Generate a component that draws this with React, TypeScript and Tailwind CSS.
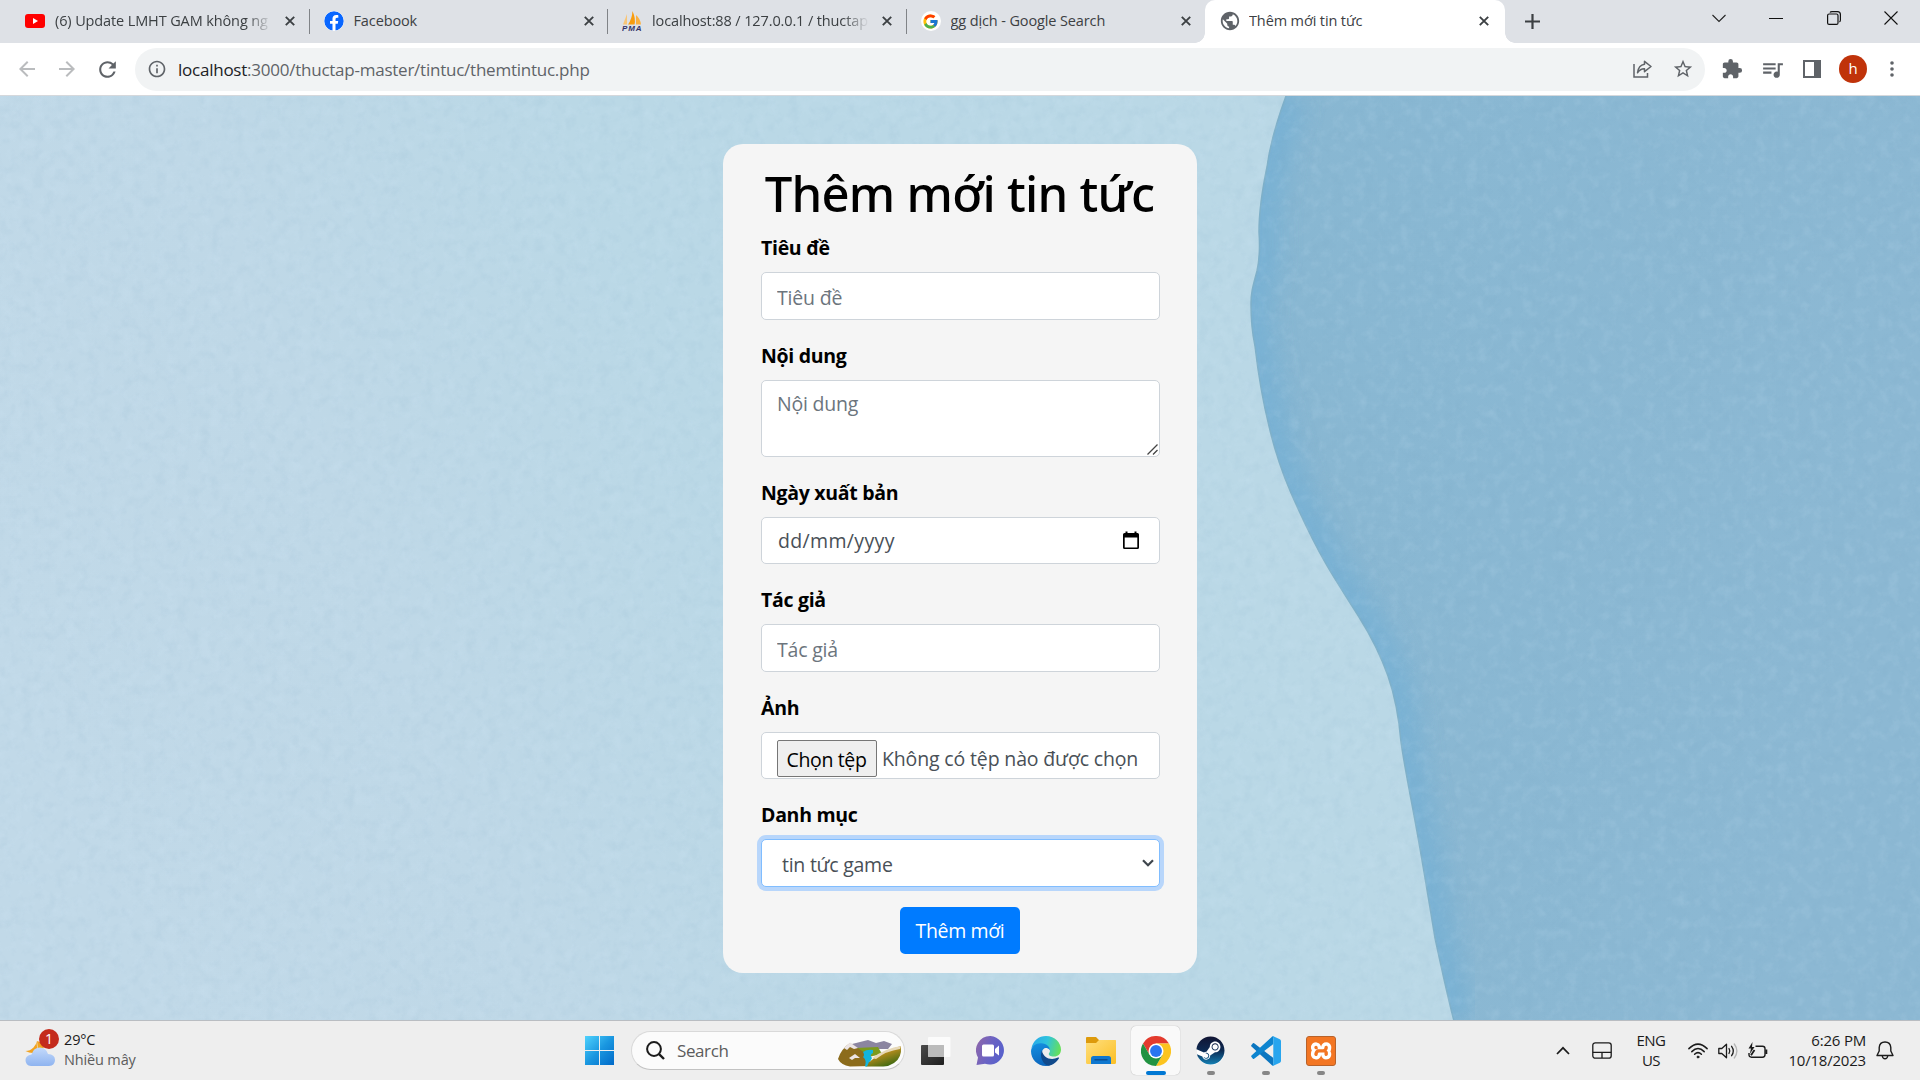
import React from "react";
import {
  MdArrowBack,
  MdArrowForward,
  MdRefresh,
  MdInfoOutline,
  MdStarBorder,
  MdExtension,
  MdQueueMusic,
  MdPublic,
} from "react-icons/md";
import { FcGoogle } from "react-icons/fc";
import { FaFacebook, FaSteam } from "react-icons/fa";
import { SiXampp } from "react-icons/si";

/* ---------- Browser tabs ---------- */

function YoutubeIcon() {
  return (
    <svg width="20" height="14" viewBox="0 0 20 14">
      <rect width="20" height="14" rx="3" fill="#ff0000" />
      <path d="M8 4 L13 7 L8 10 Z" fill="#fff" />
    </svg>
  );
}

function PmaIcon() {
  return (
    <svg width="20" height="20" viewBox="0 0 20 20">
      <path d="M5 3 L5 13.500 L1 13.500 Z" fill="#f8c577" />
      <path d="M10.500 0 Q14 8 12.500 13.500 L6 13.500 Q10 8 10.500 0Z" fill="#f89c0e" />
      <path d="M14 4 Q18.500 8 19 13.500 L14 13.500 Z" fill="#fbb040" />
      <text x="0" y="19.500" fontSize="8" fontWeight="700" fontStyle="italic" textLength="19.500" fontFamily="Liberation Sans, sans-serif" fill="#333366">
        PMA
      </text>
    </svg>
  );
}

function GoogleIcon() {
  return (
    <span className="flex size-5 items-center justify-center rounded-full bg-white">
      <FcGoogle size={17} />
    </span>
  );
}

function CloseX() {
  return (
    <svg width="10" height="10" viewBox="0 0 10 10" className="shrink-0">
      <path d="M0.800 0.800 L9.200 9.200 M9.200 0.800 L0.800 9.200" stroke="#3c4043" strokeWidth="1.900" fill="none" />
    </svg>
  );
}

function Tab({ icon, title, divider, fade }: { icon: React.ReactNode; title: string; divider?: boolean; fade?: boolean }) {
  return (
    <div className="flex h-full w-[298.5px] items-center pb-px pl-[14px]">
      <span className="flex w-5 shrink-0 justify-center">{icon}</span>
      <span
        className={
          "ml-[10px] w-[217px] overflow-hidden text-[14.5px] leading-5 tracking-[-0.12px] whitespace-nowrap text-[#3c4043]" +
          (fade ? " [mask-image:linear-gradient(to_right,black_88%,transparent)]" : "")
        }
      >
        {title}
      </span>
      <span className="ml-[13px] flex">
        <CloseX />
      </span>
      {divider && <span className="ml-auto h-[25px] w-px bg-[#808387]" />}
    </div>
  );
}

function TabStrip() {
  return (
    <div className="flex h-[43px] bg-[#dee1e6] pl-[11px]">
      <Tab icon={<YoutubeIcon />} title="(6) Update LMHT GAM không ng" divider fade />
      <Tab icon={<FaFacebook size={20} color="#0866ff" className="rounded-full bg-white" />} title="Facebook" divider />
      <Tab icon={<PmaIcon />} title="localhost:88 / 127.0.0.1 / thuctap" divider fade />
      <Tab icon={<GoogleIcon />} title="gg dịch - Google Search" />
      <div className="relative h-full w-[300px] rounded-t-[10px] bg-white">
        <span className="absolute bottom-0 -left-[10px] size-[10px] bg-[radial-gradient(circle_at_0_0,transparent_9.5px,white_10px)]" />
        <span className="absolute -right-[10px] bottom-0 size-[10px] bg-[radial-gradient(circle_at_100%_0,transparent_9.5px,white_10px)]" />
        <Tab icon={<MdPublic size={22} color="#5f6368" className="ml-px shrink-0" />} title="Thêm mới tin tức" />
      </div>
      <div className="ml-[20px] flex items-center">
        <svg width="15" height="15" viewBox="0 0 15 15">
          <path d="M7.500 0 V15 M0 7.500 H15" stroke="#3c4043" strokeWidth="2.200" />
        </svg>
      </div>
      <div className="mt-[11px] mr-[22px] ml-auto flex h-[14px] items-center gap-[43.500px]">
        <svg width="14" height="14" viewBox="0 0 14 14" className="text-[#222]">
          <path d="M0.500 4 L7 10.500 L13.500 4" fill="none" stroke="currentColor" strokeWidth="1.100" />
        </svg>
        <svg width="14" height="14" viewBox="0 0 14 14">
          <path d="M0 7.500 H14" stroke="#111" strokeWidth="1" />
        </svg>
        <svg width="14" height="14" viewBox="0 0 14 14" fill="none" stroke="#111" strokeWidth="1.200">
          <rect x="0.600" y="3" width="10.400" height="10.400" rx="1.500" />
          <path d="M3 1.500 Q3.500 0.600 5 0.600 H10.500 Q13.400 0.600 13.400 3.500 V9 Q13.400 10.500 12.400 11" />
        </svg>
        <svg width="14" height="14" viewBox="0 0 14 14">
          <path d="M0.500 0.500 L13.500 13.500 M13.500 0.500 L0.500 13.500" stroke="#111" strokeWidth="1.100" />
        </svg>
      </div>
    </div>
  );
}

function Toolbar() {
  return (
    <div className="flex h-[53px] items-center border-b border-[#d5d8dc] bg-white pr-[18px] pl-[15px] text-[#5f6368]">
      <MdArrowBack size={24} color="#babcbe" />
      <MdArrowForward size={24} color="#babcbe" className="ml-[16px]" />
      <MdRefresh size={25} className="ml-[16px]" />
      <div className="ml-[15px] flex h-[43px] w-[1570px] items-center rounded-full bg-[#f1f3f4] pr-[11px] pl-[12px]">
        <MdInfoOutline size={20} />
        <span className="ml-[11px] pt-px text-[17px] leading-6 tracking-[-0.24px] text-[#5f6368]">
          <span className="text-[#202124]">localhost</span>:3000/thuctap-master/tintuc/themtintuc.php
        </span>
        <svg width="19" height="18" viewBox="0 0 19 18" className="ml-auto" fill="none" stroke="#5f6368" strokeWidth="1.500">
          <path d="M1 4 V17 H14.500 V13" />
          <path d="M11.500 1.300 L18 6.500 L11.500 11.700 V8.800 Q7.500 8.600 4.500 12.800 Q5.500 5.200 11.500 4.300 Z" strokeLinejoin="round" />
        </svg>
        <MdStarBorder size={22} className="ml-[20px]" />
      </div>
      <MdExtension size={22} className="ml-[16px]" />
      <MdQueueMusic size={25} className="ml-[17px]" />
      <svg width="18" height="18" viewBox="0 0 18 18" className="ml-[18px]">
        <path d="M0 0 H18 V18 H0 Z M2 2 V16 H11 V2 Z" fill="#5f6368" fillRule="evenodd" />
      </svg>
      <span className="ml-[18px] flex size-7 items-center justify-center rounded-full bg-[#c0330a] pb-px text-[15px] leading-none text-white">h</span>
      <svg width="4" height="16" viewBox="0 0 4 16" className="mr-[8px] ml-auto" fill="#5f6368">
        <circle cx="2" cy="2" r="1.800" />
        <circle cx="2" cy="8" r="1.800" />
        <circle cx="2" cy="14" r="1.800" />
      </svg>
    </div>
  );
}

/* ---------- Page ---------- */

const EDGE =
  "M1286 0 C1278 22 1270 48 1267 71 C1262 95 1259 118 1259 136 C1260 150 1259 166 1257 175 C1253 190 1251 196 1251 208 C1251 222 1252 236 1255 250 C1258 276 1263 306 1269 330 C1274 352 1282 376 1291 397 C1302 422 1314 447 1326 468 C1337 487 1349 505 1359 521 C1371 540 1381 560 1388 580 C1396 603 1399 622 1401 646 C1405 674 1411 702 1416 730 C1423 768 1429 806 1435 842 C1441 870 1447 898 1454 925";

function PaperBackdrop() {
  return (
    <svg className="absolute inset-0 h-full w-full" viewBox="0 0 1920 924" preserveAspectRatio="none">
      <defs>
        <linearGradient id="light" x1="0" y1="0.600" x2="1" y2="0.400">
          <stop offset="0" stopColor="#c1d9e8" />
          <stop offset="0.200" stopColor="#bfd8e7" />
          <stop offset="0.400" stopColor="#bad8e6" />
          <stop offset="1" stopColor="#bad8e6" />
        </linearGradient>
        <linearGradient id="dark" x1="0" y1="0" x2="1" y2="0.300">
          <stop offset="0" stopColor="#88b7d2" />
          <stop offset="1" stopColor="#8cb8d3" />
        </linearGradient>
        <clipPath id="sheet">
          <path d={EDGE + " H1920 V0 Z"} />
        </clipPath>
        <filter id="soft" x="-10%" y="-10%" width="120%" height="120%">
          <feGaussianBlur stdDeviation="11" />
        </filter>
        <filter id="grainLight" x="0" y="0" width="100%" height="100%" colorInterpolationFilters="sRGB">
          <feTurbulence type="fractalNoise" baseFrequency="0.090" numOctaves="3" seed="4" />
          <feColorMatrix values="0 0 0 0 0.860  0 0 0 0 0.940  0 0 0 0 1  1 0 0 0 -0.470" />
        </filter>
        <filter id="grainDark" x="0" y="0" width="100%" height="100%" colorInterpolationFilters="sRGB">
          <feTurbulence type="fractalNoise" baseFrequency="0.090" numOctaves="3" seed="9" />
          <feColorMatrix values="0 0 0 0 0.420  0 0 0 0 0.600  0 0 0 0 0.720  1 0 0 0 -0.470" />
        </filter>
      </defs>
      <rect width="1920" height="924" fill="url(#light)" />
      <path d={EDGE + " H1920 V0 Z"} fill="url(#dark)" />
      <g clipPath="url(#sheet)">
        <path d={EDGE} fill="none" stroke="#76b0d4" strokeWidth="40" filter="url(#soft)" opacity="0.800" />
      </g>
      <path d={EDGE} fill="none" stroke="#7fb0c9" strokeWidth="1.500" />
      <rect width="1920" height="924" filter="url(#grainLight)" opacity="0.280" />
      <rect width="1920" height="924" filter="url(#grainDark)" opacity="0.180" />
    </svg>
  );
}

const FIELD = "block w-full rounded-[5px] border border-[#ced4da] bg-white px-[15px] text-[19.5px] tracking-[-0.2px]";

function Group({ label, children }: { label: string; children: React.ReactNode }) {
  return (
    <div className="mb-[20px]">
      <label className="mb-[9px] block pt-px text-[19.5px] leading-[30px] font-bold tracking-[-0.3px] text-black">{label}</label>
      {children}
    </div>
  );
}

function NewsForm() {
  return (
    <form className="relative mx-auto mt-[48px] h-[829px] w-[474px] rounded-[20px] bg-[#f5f5f5] pt-[19px] pr-[37px] pl-[38px]">
      <h1 className="-ml-[2px] mb-[9.1px] text-center font-['Noto_Sans',sans-serif] text-[49px] leading-[60px] font-medium tracking-[-0.75px] whitespace-nowrap text-black">
        Thêm mới tin tức
      </h1>
      <Group label="Tiêu đề">
        <input className={FIELD + " h-[47.5px] pt-[3px] placeholder:text-[#6c757d] placeholder:opacity-100"} placeholder="Tiêu đề" />
      </Group>
      <Group label="Nội dung">
        <div className="relative">
          <textarea
            className={FIELD + " h-[77px] resize-none pt-[8px] leading-[30px] placeholder:text-[#6c757d] placeholder:opacity-100"}
            placeholder="Nội dung"
          />
          <svg width="11" height="11" viewBox="0 0 11 11" className="absolute right-[2px] bottom-[2px]">
            <path d="M0.500 10.500 L10.500 0.500 M6 10.500 L10.500 6" stroke="#444" strokeWidth="1.300" />
          </svg>
        </div>
      </Group>
      <Group label="Ngày xuất bản">
        <div className={FIELD + " flex! h-[47.5px] items-center justify-between text-[#495057]"}>
          <span className="pl-px tracking-[0.35px]">dd/mm/yyyy</span>
          <svg width="18" height="19" viewBox="0 0 18 19" className="mr-[4px]">
            <path
              d="M3.500 0.500 H5.500 V2 H12.500 V0.500 H14.500 V2 H15.500 Q17 2 17 3.500 V16.500 Q17 18 15.500 18 H2.500 Q1 18 1 16.500 V3.500 Q1 2 2.500 2 H3.500 Z M2.700 6.500 V16.400 H15.300 V6.500 Z"
              fill="#000"
              fillRule="evenodd"
            />
          </svg>
        </div>
      </Group>
      <Group label="Tác giả">
        <input className={FIELD + " h-[47.5px] pt-[3px] placeholder:text-[#6c757d] placeholder:opacity-100"} placeholder="Tác giả" />
      </Group>
      <Group label="Ảnh">
        <div className={FIELD + " flex! h-[47.5px] items-start pt-[7px] text-[#495057]"}>
          <button
            type="button"
            className="h-[37px] w-[100px] shrink-0 rounded-[2px] border border-[#767676] bg-[#efefef] pt-[3px] pr-px text-center leading-[30px] tracking-[-0.35px] text-black"
          >
            Chọn tệp
          </button>
          <span className="ml-[5px] pt-[4px] leading-[30px] tracking-[-0.15px] whitespace-nowrap">Không có tệp nào được chọn</span>
        </div>
      </Group>
      <Group label="Danh mục">
        <div className="flex h-[47.5px] w-full items-center justify-between rounded-[5px] border border-[#80bdff] bg-white pr-[5px] pl-[20px] text-[19.5px] tracking-[-0.25px] text-[#495057] shadow-[0_0_0_4px_#b8d6fb]">
          <span className="pt-[3px]">tin tức game</span>
          <svg width="12" height="8" viewBox="0 0 12 8" className="mt-px">
            <path d="M1 1.200 L6 6.200 L11 1.200" fill="none" stroke="#3f464d" strokeWidth="2.200" />
          </svg>
        </div>
      </Group>
      <button
        type="button"
        className="ml-[139px] block h-[47.5px] w-[120px] rounded-[5px] bg-[#007bff] text-center text-[19.5px] tracking-[-0.35px] text-white"
      >
        Thêm mới
      </button>
    </form>
  );
}

/* ---------- Taskbar ---------- */

function WeatherIcon() {
  return (
    <div className="relative h-[48px] w-[36px]">
      <svg width="30" height="30" viewBox="0 0 30 30" className="absolute top-[10px] left-0">
        <defs>
          <linearGradient id="cloud" x1="0" y1="0" x2="0" y2="1">
            <stop offset="0" stopColor="#c4dafb" />
            <stop offset="1" stopColor="#8fb4f0" />
          </linearGradient>
        </defs>
        <path d="M12 4 Q11 11 14 14 Q8 18 0.500 14 Q5 14 8.500 10.500 Q11.500 7 12 4 Z M12 4 Q17 5 19 11 L13 14 Z" fill="#f2a31f" />
        <path d="M6 29 Q0.500 28.500 0.500 23 Q0.500 18.500 6.500 17.500 Q8.500 10.500 15 10.500 Q21 10.500 23 17 Q30 17.500 30 23 Q30 28.500 24 29 Z" fill="url(#cloud)" />
      </svg>
      <span className="absolute top-[2px] left-[14px] flex size-5 items-center justify-center rounded-full bg-[#c42b1c] text-[14px] leading-none text-white">
        1
      </span>
    </div>
  );
}

function WindowsLogo() {
  return (
    <svg width="29" height="29" viewBox="0 0 29 29">
      <defs>
        <linearGradient id="win" x1="0" y1="0" x2="29" y2="29" gradientUnits="userSpaceOnUse">
          <stop offset="0" stopColor="#4fd2fd" />
          <stop offset="0.500" stopColor="#1a97e0" />
          <stop offset="1" stopColor="#0069c8" />
        </linearGradient>
      </defs>
      <path d="M0 0 H14 V14 H0 Z M15 0 H29 V14 H15 Z M0 15 H14 V29 H0 Z M15 15 H29 V29 H15 Z" fill="url(#win)" />
    </svg>
  );
}

function Landscape() {
  return (
    <svg width="64" height="27" viewBox="0 0 64 27">
      <defs>
        <linearGradient id="hill" x1="0" y1="0" x2="0.600" y2="1">
          <stop offset="0" stopColor="#d9a032" />
          <stop offset="0.500" stopColor="#b08a1c" />
          <stop offset="1" stopColor="#3f6a12" />
        </linearGradient>
      </defs>
      <path d="M10 5 L22 2 L30 0 L38 3 L46 1 L54 4 L50 9 L14 9 Z" fill="#8b85a0" />
      <path d="M18 8 L40 7 L44 14 L26 18 Z" fill="#7c9a1d" />
      <path d="M0 19 Q3 9 12 3 L27 13 L34 26 L12 26.500 Q3 25 0 19 Z" fill="#8c6c1c" />
      <path d="M28 26.500 Q36 14 63 6 Q64 18 56 23 Q50 27 44 26.500 Z" fill="url(#hill)" />
      <path d="M6 8 L12 2.500 L20 8 L16 9 L12 7 L9 10 Z M11 18 L17 14 L22 18 L17 18 L14 20 Z" fill="#ece5e6" />
      <path d="M34 18 Q48 8 63 6 L62 9 Q48 11 38 19 Z" fill="#e6d8b8" />
      <path d="M25 12 Q29 9 35 10 L35 13 Q31 15 34 18 Q33 21 31 22 L29 26.500 H27 Q29 20 25 17 Q27 15 25 12 Z" fill="#12b5dd" />
    </svg>
  );
}

function TaskView() {
  return (
    <svg width="30" height="28" viewBox="0 0 30 28">
      <defs>
        <linearGradient id="pane" x1="0" y1="0" x2="1" y2="1">
          <stop offset="0" stopColor="#4a4a4a" />
          <stop offset="1" stopColor="#1e1e1e" />
        </linearGradient>
      </defs>
      <rect x="0" y="8" width="23" height="20" rx="1" fill="url(#pane)" />
      <rect x="7" y="0" width="22.500" height="20" rx="1" fill="#fff" opacity="0.750" />
      <rect x="7" y="8" width="16" height="12" fill="#b4b4b4" opacity="0.700" />
    </svg>
  );
}

function ChatIcon() {
  return (
    <svg width="29" height="29" viewBox="0 0 29 29">
      <defs>
        <linearGradient id="chat" x1="0" y1="0.300" x2="1" y2="0.700">
          <stop offset="0" stopColor="#8b66ac" />
          <stop offset="0.500" stopColor="#6a63c4" />
          <stop offset="1" stopColor="#5560cc" />
        </linearGradient>
      </defs>
      <path d="M14.500 0 A14.300 14.300 0 1 1 9 27.800 L0.500 29 L2 21.500 A14.300 14.300 0 0 1 14.500 0 Z" fill="url(#chat)" />
      <rect x="6" y="8.500" width="12" height="12" rx="1.500" fill="#fff" />
      <path d="M19 13 L23 9.500 V19.500 L19 16.500 Z" fill="#fff" />
    </svg>
  );
}

function EdgeIcon() {
  return (
    <svg width="30" height="30" viewBox="0 0 30 30">
      <defs>
        <linearGradient id="edgeTop" x1="0" y1="0.300" x2="1" y2="0.500">
          <stop offset="0" stopColor="#28a8ea" />
          <stop offset="0.500" stopColor="#2fc3dd" />
          <stop offset="1" stopColor="#66e05a" />
        </linearGradient>
        <linearGradient id="edgeBody" x1="0" y1="0" x2="0.300" y2="1">
          <stop offset="0" stopColor="#1591e2" />
          <stop offset="1" stopColor="#0b66bd" />
        </linearGradient>
      </defs>
      <path d="M0.300 13 C2 4 8 0 15 0 C24 0 30 7 30 13.500 C30 18 27 20.500 23 20.500 C19 20.500 17.800 19 17.800 18 C17.800 17 19 16.500 19 14.500 C19 11 14 8 8.500 8.500 C4 9 1 11 0.300 13 Z" fill="url(#edgeTop)" />
      <path d="M0 15 C0.500 10 5 7 10 7.200 C16 7.500 19 11 19 14.500 C18 12.500 16 12 14.500 12 C11.500 12.500 10.500 16 11 19 C12 24 18 27.500 23.500 26 C21 28.500 18 30 15 30 C6 30 0 23 0 15 Z" fill="url(#edgeBody)" />
      <path d="M11 14.500 C8 20 12 29.500 18 29.700 C22 29 26 26 28 22.300 C28.300 21.500 27.700 21.200 27 21.600 C20 25 12 22 11 14.500 Z" fill="#114a8b" />
    </svg>
  );
}

function FolderIcon() {
  return (
    <svg width="30" height="27" viewBox="0 0 30 27">
      <defs>
        <linearGradient id="folder" x1="0" y1="0" x2="1" y2="1">
          <stop offset="0" stopColor="#ffdf7e" />
          <stop offset="1" stopColor="#fbbf24" />
        </linearGradient>
      </defs>
      <path d="M0 1 Q0 0 1 0 H10 L13 3 H29 V12 H0 Z" fill="#dd9a0c" />
      <path d="M0 6 H10 L13 3 H29.500 Q30 3 30 4 V25.500 Q30 27 28.500 27 H1.500 Q0 27 0 25.500 Z" fill="url(#folder)" />
      <path d="M5 27 V21.500 Q5 19 7.500 19 H22.500 Q25 19 25 21.500 V27 Z" fill="#0f77cf" />
      <path d="M9 22.700 H21" stroke="#0a4f94" strokeWidth="1.400" strokeLinecap="round" />
    </svg>
  );
}

function ChromeIcon() {
  return (
    <svg width="30" height="30" viewBox="0 0 48 48">
      <path d="M24 12 H44.800 A24 24 0 0 0 3.200 12 L13.600 30 Z" fill="#e33b2e" />
      <path d="M34.400 30 L24 48 A24 24 0 0 0 44.800 12 H24 Z" fill="#fcc41f" />
      <path d="M13.600 30 L3.200 12 A24 24 0 0 0 24 48 L34.400 30 Z" fill="#229342" />
      <circle cx="24" cy="24" r="12" fill="#fff" />
      <circle cx="24" cy="24" r="9.500" fill="#2a75f0" />
    </svg>
  );
}

function SteamIcon() {
  return (
    <span className="relative flex size-7 items-center justify-center rounded-full bg-white">
      <svg width="0" height="0" className="absolute">
        <defs>
          <linearGradient id="steam" x1="0" y1="0" x2="0" y2="1">
            <stop offset="0" stopColor="#111433" />
            <stop offset="0.500" stopColor="#0c2a52" />
            <stop offset="1" stopColor="#1480b4" />
          </linearGradient>
        </defs>
      </svg>
      <FaSteam size={29} fill="url(#steam)" className="shrink-0" />
    </span>
  );
}

function CodeIcon() {
  return (
    <svg width="30" height="30" viewBox="0 0 30 30">
      <path d="M2.800 6.900 L22.300 21.900 V29.700 Q21.300 29.700 20.700 29 L0.500 10.600 Q-0.200 9.800 0.500 9.100 L1.900 7.300 Q2.400 6.800 2.800 6.900 Z" fill="#0b76c0" />
      <path d="M2.800 23.100 L22.300 8.100 V0.300 Q21.300 0.300 20.700 1 L0.500 19.400 Q-0.200 20.200 0.500 20.900 L1.900 22.700 Q2.400 23.200 2.800 23.100 Z" fill="#0d84cf" />
      <path d="M22.300 0.200 L28.800 3.300 Q30 3.900 30 5.200 V24.800 Q30 26.100 28.800 26.700 L22.300 29.800 Q21.200 30 20.600 29 Q22.300 29.800 22.300 27.600 V2.400 Q22.300 0.200 20.600 1 Q21.200 0 22.300 0.200 Z" fill="#27a5ee" />
    </svg>
  );
}

function XamppIcon() {
  return (
    <span className="flex size-[30px] items-center justify-center rounded-[3px] border border-[#b8622a] bg-[#f37623]">
      <span className="flex size-[24px] items-center justify-center bg-white">
        <SiXampp size={28} color="#f37623" className="shrink-0" />
      </span>
    </span>
  );
}

function AppSlot({ children, state }: { children: React.ReactNode; state?: "open" | "active" }) {
  return (
    <div className="flex w-[55px] justify-center">
      <div
        className={
          "relative flex h-[49px] w-[49px] items-center justify-center rounded-[5px]" +
          (state === "active" ? " bg-[#f9f9f9] shadow-[0_0_1px_rgba(0,0,0,0.35)]" : "")
        }
      >
        {children}
        {state === "active" && <span className="absolute bottom-0 h-[4px] w-5 rounded-full bg-[#0078d4]" />}
        {state === "open" && <span className="absolute bottom-0 h-[4px] w-2 rounded-full bg-[#868686]" />}
      </div>
    </div>
  );
}

function Tray() {
  return (
    <div className="ml-auto flex items-center pr-[26px] text-[15px] leading-5 text-[#1b1b1b]">
      <svg width="14" height="9" viewBox="0 0 14 9">
        <path d="M1 8 L7 1.800 L13 8" fill="none" stroke="#1b1b1b" strokeWidth="1.700" />
      </svg>
      <svg width="20" height="17" viewBox="0 0 20 17" className="ml-[22px]" fill="none" stroke="#1b1b1b" strokeWidth="1.300">
        <rect x="0.800" y="0.800" width="18.400" height="15.400" rx="2.500" />
        <path d="M0.800 10.300 H19.200 M10 10.300 V16" />
      </svg>
      <div className="ml-[23px] w-[32px] pb-[2px] text-center tracking-[-0.5px]">
        <div>ENG</div>
        <div>US</div>
      </div>
      <svg width="20" height="16" viewBox="0 0 20 16" className="ml-[21px]" fill="none" stroke="#1b1b1b" strokeWidth="1.500" strokeLinecap="round">
        <path d="M0.900 5.600 Q10 -3.400 19.100 5.600" />
        <path d="M3.800 8.600 Q10 2.400 16.200 8.600" />
        <path d="M6.600 11.300 Q10 8 13.400 11.300" />
        <circle cx="10" cy="14" r="1" fill="#1b1b1b" strokeWidth="0.800" />
      </svg>
      <svg width="20" height="16" viewBox="0 0 20 16" className="ml-[10px]" fill="none" stroke="#1b1b1b" strokeWidth="1.300" strokeLinecap="round" strokeLinejoin="round">
        <path d="M0.800 5.500 H3.800 L8.500 1.200 V14.800 L3.800 10.500 H0.800 Z" />
        <path d="M11 5.500 Q12.600 8 11 10.500" />
        <path d="M13.600 3.300 Q17 8 13.600 12.700" />
        <path d="M16.300 1 Q21.500 8 16.300 15" stroke="#b5b5b5" />
      </svg>
      <svg width="20" height="17" viewBox="0 0 20 17" className="ml-[10px]" fill="none" stroke="#1b1b1b" strokeWidth="1.400">
        <path d="M7.500 4.200 H14.500 Q17 4.200 17 6.500 V12.800 Q17 15.200 14.500 15.200 H3.500 Q1 15.200 1 12.800 V11" />
        <path d="M18.300 7.500 V12" strokeWidth="2" />
        <path d="M4.500 0 L0.500 6.500 H3 L1.800 12 L6.500 5 H4 Z" fill="#1b1b1b" stroke="none" />
        <path d="M3 13.300 L6.500 8" strokeWidth="1.800" />
      </svg>
      <div className="ml-[17px] w-[81px] pb-[2px] text-right tracking-[-0.2px] whitespace-nowrap">
        <div>6:26 PM</div>
        <div>10/18/2023</div>
      </div>
      <svg width="18" height="19" viewBox="0 0 18 19" className="ml-[10px]" fill="none" stroke="#1b1b1b" strokeWidth="1.400" strokeLinejoin="round">
        <path d="M9 1 Q3.600 1 3.200 6.500 V10 L1 14.500 H17 L14.800 10 V6.500 Q14.400 1 9 1 Z" />
        <path d="M6.300 15 Q6.800 17.800 9 17.800 Q11.200 17.800 11.700 15" />
      </svg>
    </div>
  );
}

function Taskbar() {
  return (
    <div className="flex h-[60px] items-center border-t border-[#b9bdc2] bg-[#eeeeee]">
      <div className="flex w-[585px] items-center pl-[25px]">
        <WeatherIcon />
        <div className="ml-[3px] pb-[2px] text-[14.5px] leading-5 tracking-[-0.15px]">
          <div className="text-[#1b1b1b]">29°C</div>
          <div className="text-[#5c5c5c]">Nhiều mây</div>
        </div>
      </div>
      <WindowsLogo />
      <div className="ml-[17px] flex h-[39px] w-[274px] items-center rounded-full border border-[#d9d9d9] border-b-[#c2c2c2] bg-[#fbfbfb] pr-[2px] pl-[14px]">
        <svg width="19" height="19" viewBox="0 0 19 19" fill="none" stroke="#1b1b1b" strokeWidth="2">
          <circle cx="8" cy="8" r="6.900" />
          <path d="M12.800 12.800 L18 18" strokeWidth="2.400" />
        </svg>
        <span className="ml-[12px] text-[17px] leading-6 tracking-[-0.4px] text-[#5c5c5c]">Search</span>
        <span className="ml-auto pt-[5px]">
          <Landscape />
        </span>
      </div>
      <span className="mr-[12px] ml-[16px]">
        <TaskView />
      </span>
      <AppSlot>
        <ChatIcon />
      </AppSlot>
      <AppSlot>
        <EdgeIcon />
      </AppSlot>
      <AppSlot>
        <FolderIcon />
      </AppSlot>
      <AppSlot state="active">
        <ChromeIcon />
      </AppSlot>
      <AppSlot state="open">
        <SteamIcon />
      </AppSlot>
      <AppSlot state="open">
        <CodeIcon />
      </AppSlot>
      <AppSlot state="open">
        <XamppIcon />
      </AppSlot>
      <Tray />
    </div>
  );
}

export default function App() {
  return (
    <div className="flex h-[1080px] w-[1920px] flex-col overflow-hidden font-['Open_Sans','Noto_Sans',sans-serif]">
      <TabStrip />
      <Toolbar />
      <main className="relative h-[924px] overflow-hidden">
        <PaperBackdrop />
        <NewsForm />
      </main>
      <Taskbar />
    </div>
  );
}
